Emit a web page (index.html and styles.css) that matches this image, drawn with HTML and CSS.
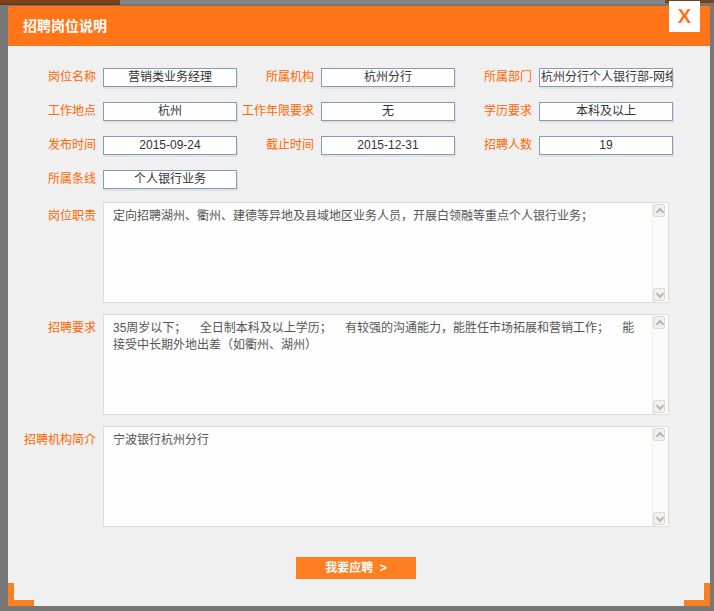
FILE: index.html
```html
<!DOCTYPE html>
<html lang="zh-CN">
<head>
<meta charset="utf-8">
<title>招聘岗位说明</title>
<link rel="stylesheet" href="styles.css">
</head>
<body>
<div class="topstrip"><span class="seg-a"></span><span class="seg-b"></span><span class="seg-c"></span></div>
<div class="stage">
  <div class="dialog">
    <div class="header">招聘岗位说明</div>
    <div class="close">X</div>
    <div class="content">
      <div class="grid">
        <div class="cell"><span class="label">岗位名称</span><div class="box">营销类业务经理</div></div>
        <div class="cell"><span class="label">所属机构</span><div class="box">杭州分行</div></div>
        <div class="cell"><span class="label">所属部门</span><div class="box left">杭州分行个人银行部-网络金融部</div></div>
        <div class="cell"><span class="label">工作地点</span><div class="box">杭州</div></div>
        <div class="cell"><span class="label">工作年限要求</span><div class="box">无</div></div>
        <div class="cell"><span class="label">学历要求</span><div class="box">本科及以上</div></div>
        <div class="cell"><span class="label">发布时间</span><div class="box">2015-09-24</div></div>
        <div class="cell"><span class="label">截止时间</span><div class="box">2015-12-31</div></div>
        <div class="cell"><span class="label">招聘人数</span><div class="box">19</div></div>
        <div class="cell"><span class="label">所属条线</span><div class="box">个人银行业务</div></div>
      </div>
      <div class="areas">
        <div class="arow">
          <span class="label alabel">岗位职责</span>
          <div class="tarea">
            <div class="text">定向招聘湖州、衢州、建德等异地及县域地区业务人员，开展白领融等重点个人银行业务；</div>
            <div class="sbar"><span class="sbtn up"></span><span class="sbtn down"></span></div>
          </div>
        </div>
        <div class="arow">
          <span class="label alabel">招聘要求</span>
          <div class="tarea">
            <div class="text"><span class="line">35周岁以下；    全日制本科及以上学历；    有较强的沟通能力，能胜任市场拓展和营销工作；    能</span><span class="line">接受中长期外地出差（如衢州、湖州）</span></div>
            <div class="sbar"><span class="sbtn up"></span><span class="sbtn down"></span></div>
          </div>
        </div>
        <div class="arow">
          <span class="label alabel">招聘机构简介</span>
          <div class="tarea">
            <div class="text">宁波银行杭州分行</div>
            <div class="sbar"><span class="sbtn up"></span><span class="sbtn down"></span></div>
          </div>
        </div>
      </div>
      <div class="actions"><button class="apply">我要应聘&nbsp;&nbsp;&gt;</button></div>
    </div>
    <span class="corner bl"></span>
    <span class="corner br"></span>
  </div>
</div>
</body>
</html>
```
FILE: styles.css
```css
html, body {
  margin: 0;
  padding: 0;
  background: #777777;
  font-family: "Liberation Sans", "Noto Sans CJK SC", sans-serif;
  font-size: 12px;
  height: 611px;
  overflow: hidden;
}
.topstrip {
  height: 6px;
  display: flex;
}
.seg-a { width: 120px; height: 4px; background: #7a4216; border-bottom: 1px solid #5a3414; }
.seg-b { width: 545px; height: 4px; background: #868686; }
.seg-c { width: 49px; height: 3px; background: #6f4525; }
.stage {
  padding: 0 4px 0 8px;
}
.dialog {
  position: relative;
  width: 702px;
  height: 600px;
  background: #f1f0f0;
}
.header {
  height: 40px;
  background: #ff7518;
  color: #ffffff;
  font-weight: bold;
  font-size: 14px;
  line-height: 40px;
  padding-left: 15px;
}
.close {
  position: absolute;
  top: -5px;
  right: 10px;
  width: 31px;
  height: 31px;
  background: #ffffff;
  color: #ff7518;
  font-weight: bold;
  font-size: 20px;
  line-height: 31px;
  text-align: center;
}
.content {
  padding: 22px 0 0 16px;
}
.grid {
  display: grid;
  grid-template-columns: 218px 218px 218px;
  row-gap: 15px;
}
.cell {
  display: flex;
  align-items: center;
}
.label {
  width: 72px;
  margin-right: 7px;
  text-align: right;
  color: #ff6600;
  font-size: 12px;
  line-height: 19px;
  white-space: nowrap;
  flex: none;
}
.box {
  width: 134px;
  height: 19px;
  box-sizing: border-box;
  border: 1px solid #7f9db9;
  background: #ffffff;
  color: #333333;
  text-align: center;
  line-height: 17px;
  white-space: nowrap;
  overflow: hidden;
  box-shadow: 1px 2px 0 #e1e1e1;
}
.box.left {
  text-align: left;
  padding-left: 1px;
}
.areas {
  margin-top: 13px;
  display: flex;
  flex-direction: column;
  gap: 11px;
}
.arow {
  display: flex;
  align-items: flex-start;
}
.alabel {
  padding-top: 6px;
  line-height: 17px;
}
.tarea {
  width: 566px;
  height: 101px;
  box-sizing: border-box;
  border: 1px solid #dcdcdc;
  background: #fdfdfd;
  display: flex;
}
.text {
  flex: 1;
  padding: 5px 9px;
  color: #555555;
  line-height: 17px;
  white-space: pre;
  overflow: hidden;
}
.line {
  display: block;
}
.sbar {
  width: 14px;
  padding: 1px 1px 1px 0;
  display: flex;
  flex-direction: column;
  justify-content: space-between;
  background: #fbfbfb;
  border-left: 1px solid #f0f0f0;
}
.sbtn {
  position: relative;
  width: 12px;
  height: 13px;
  box-sizing: border-box;
  border: 1px solid #dcdacb;
  border-radius: 2px;
  background: #f1f0ea;
}
.sbtn::after {
  content: "";
  position: absolute;
  left: 3px;
  width: 4px;
  height: 4px;
  border-color: #b7b7b7;
  border-style: solid;
  border-width: 2px 0 0 2px;
}
.sbtn.up::after {
  top: 4px;
  transform: rotate(45deg);
}
.sbtn.down::after {
  top: 2px;
  transform: rotate(225deg);
}
.actions {
  margin-top: 30px;
  padding-left: 272px;
}
.apply {
  display: block;
  width: 120px;
  height: 22px;
  border: none;
  padding: 0;
  background: #ff7e22;
  color: #ffffff;
  font-family: "Liberation Sans", "Noto Sans CJK SC", sans-serif;
  font-size: 12px;
  font-weight: bold;
  line-height: 22px;
  text-align: center;
}
.corner {
  position: absolute;
  bottom: 0;
  width: 26px;
  height: 23px;
}
.corner.bl {
  left: 0;
  border-left: 6px solid #ff7e22;
  border-bottom: 6px solid #ff7e22;
  box-sizing: border-box;
}
.corner.br {
  right: 0;
  border-right: 6px solid #ff7e22;
  border-bottom: 6px solid #ff7e22;
  box-sizing: border-box;
}
```
